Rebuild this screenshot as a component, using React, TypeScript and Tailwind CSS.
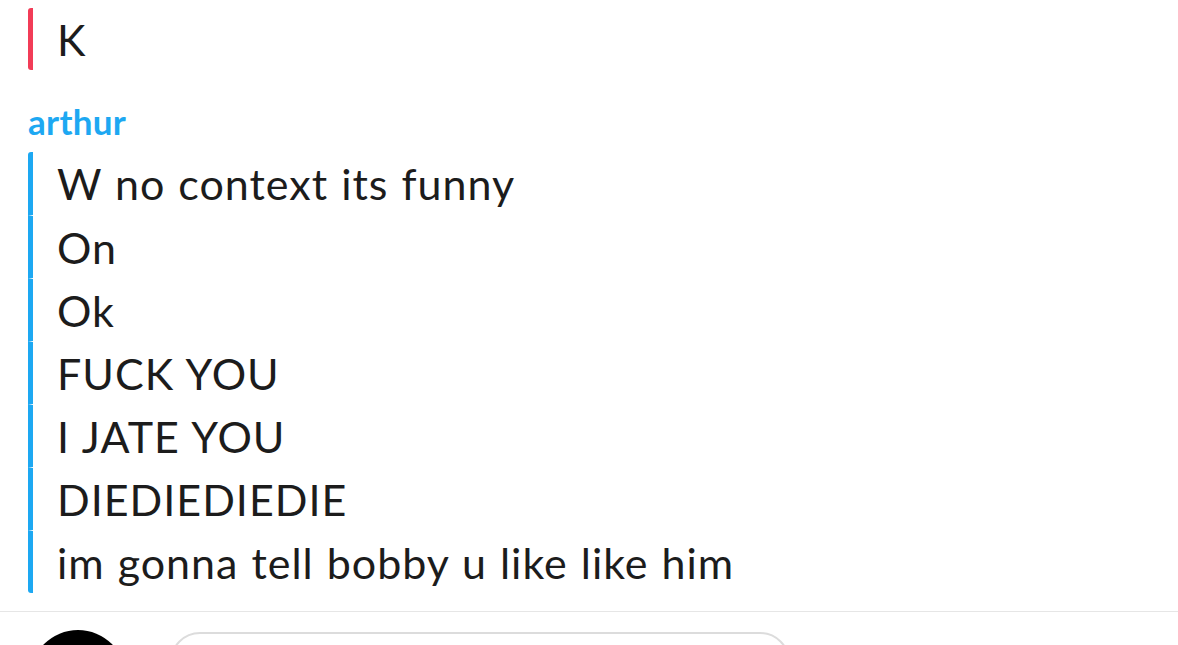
import React from 'react';

const lines = [
  'W no context its funny',
  'On',
  'Ok',
  'FUCK YOU',
  'I JATE YOU',
  'DIEDIEDIEDIE',
  'im gonna tell bobby u like like him',
];

const font = { fontFamily: 'Lato, "Open Sans", sans-serif' };

export default function App() {
  return (
    <div className="w-[1178px] h-[645px] overflow-hidden bg-white flex flex-col" style={font}>
      <div className="flex-1 flex flex-col pl-[28px] pt-[8px]">
        <div className="flex h-[62px] border-l-[5px] border-[#f23c57] rounded-[3px] items-center pl-[24px]">
          <span className="text-[43px] leading-none text-[#1c1c1c] tracking-[1px]">K</span>
        </div>

        <div className="h-[82px] flex items-end pb-[13px]">
          <span className="text-[35px] font-bold leading-none text-[#1da8f2] tracking-[0.3px]">arthur</span>
        </div>

        <div className="flex flex-col rounded-[3px] overflow-hidden">
          {lines.map((line, i) => (
            <div
              key={i}
              className={`h-[63px] flex items-center pl-[24px] border-l-[5px] border-[#1da8f2] ${
                i > 0 ? 'border-t border-t-white' : ''
              }`}
            >
              <span className="text-[43px] leading-none text-[#1c1c1c] whitespace-nowrap tracking-[1px] [word-spacing:1px]">
                {line}
              </span>
            </div>
          ))}
        </div>
      </div>

      <div className="border-t border-[#e6e6e6] h-[34px] flex items-start gap-[44px] pl-[30px] pt-[18px]">
        <div className="w-[96px] h-[96px] rounded-full bg-black shrink-0" />
        <div className="w-[620px] h-[60px] rounded-full border-2 border-[#dcdcdc] shrink-0 mt-[2px]" />
      </div>
    </div>
  );
}
